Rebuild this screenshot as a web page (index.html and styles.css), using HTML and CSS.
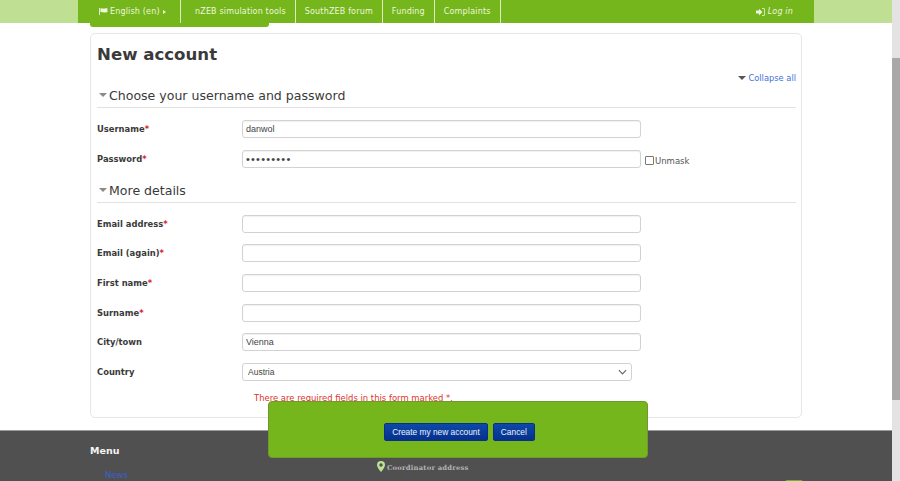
FILE: index.html
```html
<!DOCTYPE html>
<html lang="en">
<head>
    <meta charset="UTF-8">
    <meta name="viewport" content="width=device-width, initial-scale=1.0">
    <title>New account</title>
    <link rel="stylesheet" href="styles.css">
</head>
<body>
    <div class="page">
        <nav class="nav-bar">
            <div class="nav-inner">
                <ul class="nav-list">
                    <li class="nav-lang">
                        <svg class="nav-flag" viewBox="0 0 10 8"><path d="M0 0h1v8H0zM1.500 .5c2-1 3 .8 5 .2 1-.3 2-.4 3-.2v4.300c-1.500-.3-2.500.4-4 .4-1.500 0-2.500-1-4-.3z"/></svg>
                        <span>English (en)</span>
                        <span class="nav-caret"></span>
                    </li>
                    <li class="nav-tools">nZEB simulation tools</li>
                    <li>SouthZEB forum</li>
                    <li>Funding</li>
                    <li>Complaints</li>
                </ul>
                <div class="nav-login">
                    <svg class="nav-login-icon" viewBox="0 0 12 10"><path d="M0 3h4V0.500L8.500 5 4 9.500V7H0zM8 0h2.500A1.500 1.500 0 0 1 12 1.500v7A1.500 1.500 0 0 1 10.500 10H8V9h2.300a.7.7 0 0 0 .7-.7V1.700a.7.7 0 0 0-.7-.7H8z"/></svg>
                    <em>Log in</em>
                </div>
            </div>
        </nav>
        <div class="nav-tab"></div>

        <main class="card">
            <h1 class="card-title">New account</h1>
            <div class="collapse-row"><a class="collapse-link"><span class="caret caret-link"></span>Collapse all</a></div>

            <h2 class="section-title"><span class="caret"></span>Choose your username and password</h2>
            <div class="form-row">
                <label class="form-label">Username<span class="req">*</span></label>
                <input class="form-input" type="text" value="danwol">
            </div>
            <div class="form-row">
                <label class="form-label">Password<span class="req">*</span></label>
                <input class="form-input form-password" type="password" value="secret123">
                <span class="unmask"><span class="unmask-box"></span>Unmask</span>
            </div>

            <h2 class="section-title section-more"><span class="caret"></span>More details</h2>
            <div class="form-row">
                <label class="form-label">Email address<span class="req">*</span></label>
                <input class="form-input" type="text">
            </div>
            <div class="form-row">
                <label class="form-label">Email (again)<span class="req">*</span></label>
                <input class="form-input" type="text">
            </div>
            <div class="form-row">
                <label class="form-label">First name<span class="req">*</span></label>
                <input class="form-input" type="text">
            </div>
            <div class="form-row">
                <label class="form-label">Surname<span class="req">*</span></label>
                <input class="form-input" type="text">
            </div>
            <div class="form-row">
                <label class="form-label">City/town</label>
                <input class="form-input" type="text" value="Vienna">
            </div>
            <div class="form-row">
                <label class="form-label">Country</label>
                <div class="form-select">
                    Austria
                    <svg class="select-arrow" viewBox="0 0 10 6"><path d="M1 1l4 4 4-4" fill="none" stroke="#666" stroke-width="1.300"/></svg>
                </div>
            </div>
            <p class="required-note">There are required fields in this form marked *.</p>
        </main>

        <footer class="footer">
            <div class="footer-menu">
                <h3 class="footer-title">Menu</h3>
                <a class="footer-link">News</a>
            </div>
            <div class="footer-address">
                <svg class="pin" viewBox="0 0 8 11"><path fill-rule="evenodd" d="M4 0a4 4 0 0 1 4 4c0 2.500-2.500 5-4 7-1.500-2-4-4.500-4-7a4 4 0 0 1 4-4zm0 2.300a1.700 1.700 0 1 0 0 3.400 1.700 1.700 0 0 0 0-3.400z"/></svg>
                Coordinator address
            </div>
            <div class="footer-badge"></div>
        </footer>

        <div class="action-panel">
            <button class="btn">Create my new account</button>
            <button class="btn">Cancel</button>
        </div>
    </div>

    <div class="scrollbar">
        <div class="scrollbar-thumb"></div>
    </div>
</body>
</html>
```

FILE: styles.css
```css
:root {
    --color-green: #74b61b;
    --color-green-light: #bfe092;
    --color-text: #3a3a3a;
    --color-border: #d2d2d2;
    --color-footer: #505050;
}

* {
    margin: 0;
    padding: 0;
    box-sizing: border-box;
}

html, body {
    height: 481px;
    overflow: hidden;
}

body {
    display: flex;
    font-family: "DejaVu Sans", sans-serif;
    color: var(--color-text);
    background: white;
}

.page {
    position: relative;
    width: 892px;
    height: 481px;
    overflow: hidden;
}

.nav-bar {
    height: 23px;
    padding: 0 78px;
    background: var(--color-green-light);
}

.nav-inner {
    display: flex;
    justify-content: space-between;
    height: 23px;
    background: var(--color-green);
    color: #eef6df;
    font-size: 8px;
    letter-spacing: 0.17px;
}

.nav-list {
    display: flex;
    list-style: none;
}

.nav-list li {
    display: flex;
    align-items: center;
    padding: 0 9px;
    border-right: 1px solid #dcedc0;
    white-space: nowrap;
}

.nav-list .nav-lang {
    width: 103px;
    padding-left: 21px;
}

.nav-list .nav-tools {
    padding-left: 14px;
}

.nav-flag {
    width: 9px;
    height: 7px;
    margin-right: 2px;
    fill: #eef6df;
}

.nav-caret {
    margin-left: 3px;
    border-left: 3px solid #eef6df;
    border-top: 2.500px solid transparent;
    border-bottom: 2.500px solid transparent;
}

.nav-login {
    display: flex;
    align-items: center;
    padding-right: 21px;
    font-size: 8px;
}

.nav-login-icon {
    width: 9px;
    height: 8px;
    margin-right: 3px;
    fill: #eef6df;
}

.nav-tab {
    width: 179px;
    height: 4px;
    margin-left: 90px;
    background: var(--color-green);
    border-radius: 0 0 3px 3px;
}

.card {
    width: 712px;
    height: 385px;
    margin: 6px 0 12px 90px;
    padding: 10px 5px 0 6px;
    background: white;
    border: 1px solid #e6e6e6;
    border-radius: 5px;
}

.card-title {
    height: 21px;
    font-size: 16.600px;
    line-height: 21px;
    font-weight: bold;
}

.collapse-row {
    display: flex;
    justify-content: flex-end;
    height: 22px;
    padding-top: 8px;
}

.collapse-link {
    font-size: 8.300px;
    line-height: 11px;
    color: #3f73d8;
}

.caret {
    display: inline-block;
    margin: 0 2px 3px 2px;
    border-top: 4px solid #8a8a8a;
    border-left: 4px solid transparent;
    border-right: 4px solid transparent;
}

.caret-link {
    margin: 0 2px 1px 0;
    border-top-color: #555;
}

.section-title {
    height: 21px;
    padding-bottom: 3px;
    border-bottom: 1px solid #e2e2e2;
    font-size: 12.550px;
    line-height: 17px;
    font-weight: normal;
}

.section-more {
    margin-top: 14px;
}

.form-row {
    display: flex;
    align-items: center;
    height: 18px;
    margin-top: 11.700px;
}

.section-title + .form-row {
    margin-top: 12px;
}

.form-label {
    width: 145px;
    flex-shrink: 0;
    font-size: 8.400px;
    font-weight: bold;
}

.req {
    color: #d81f2a;
}

.form-input {
    width: 399px;
    height: 18px;
    padding: 0 3px;
    border: 1px solid var(--color-border);
    border-radius: 3px;
    background: white;
    box-shadow: inset 0 1px 1px rgba(0,0,0,0.06);
    font-family: "Liberation Sans", sans-serif;
    font-size: 9px;
    color: #444;
    outline: none;
}

.form-password {
    font-size: 11px;
    letter-spacing: 1.200px;
}

.unmask {
    display: flex;
    align-items: center;
    margin: 4px 0 0 4px;
    font-size: 8.500px;
    color: #555;
}

.unmask-box {
    width: 9px;
    height: 9px;
    margin-right: 1px;
    border: 1px solid #777;
    border-radius: 1px;
}

.form-select {
    display: flex;
    align-items: center;
    justify-content: space-between;
    width: 390px;
    height: 18px;
    padding: 0 4px 0 5px;
    border: 1px solid var(--color-border);
    border-radius: 3px;
    font-family: "Liberation Sans", sans-serif;
    font-size: 8.500px;
    color: #444;
}

.select-arrow {
    width: 9px;
    height: 6px;
}

.required-note {
    margin: 12px 0 0 157px;
    font-size: 8.450px;
    line-height: 11px;
    color: #e0322a;
}

.footer {
    position: relative;
    height: 51px;
    background: var(--color-footer);
    border-top: 1px solid #9a9a9a;
}

.footer-menu {
    padding: 14px 0 0 90px;
}

.footer-title {
    font-size: 9.500px;
    line-height: 12px;
    color: #f4f4f4;
}

.footer-link {
    display: block;
    margin: 13px 0 0 15px;
    font-size: 8.500px;
    color: #3a5fd0;
}

.footer-address {
    position: absolute;
    top: 33px;
    left: 377px;
    display: flex;
    align-items: center;
    font-family: "DejaVu Serif", serif;
    font-size: 6.800px;
    font-weight: bold;
    color: #b4b4b4;
    letter-spacing: 0.2px;
}

.pin {
    width: 8px;
    height: 11px;
    margin: -3px 2px 0 0;
    fill: #bfe092;
}

.footer-badge {
    position: absolute;
    left: 785px;
    bottom: -4px;
    width: 18px;
    height: 5px;
    background: var(--color-green);
    border-radius: 4px;
}

/* floats over the card and footer */
.action-panel {
    position: absolute;
    top: 401px;
    left: 268px;
    display: flex;
    align-items: center;
    justify-content: center;
    gap: 5px;
    width: 380px;
    height: 57px;
    padding: 4px 0 0 3px;
    background: var(--color-green);
    border: 1px solid #6c9a2c;
    border-radius: 4px;
}

.btn {
    height: 18px;
    padding: 0 7px;
    border: 1px solid #0b2f86;
    border-radius: 2px;
    background: linear-gradient(#0d4aa8, #06308e);
    color: #eef2fb;
    font-family: "Liberation Sans", sans-serif;
    font-size: 8.350px;
}

.scrollbar {
    width: 8px;
    height: 481px;
    padding-top: 58px;
    background: #e3e3e3;
}

.scrollbar-thumb {
    height: 342px;
    background: #a8a8a8;
}
```
